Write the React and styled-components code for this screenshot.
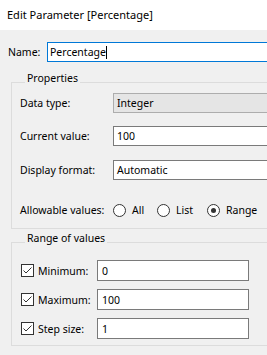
import React from 'react';
import styled, {createGlobalStyle} from 'styled-components';

const GlobalStyle = createGlobalStyle`
  html, body {
    margin: 0;
    padding: 0;
    background: #f0f0f0;
  }
  body {
    font-family: 'Noto Sans', 'Liberation Sans', sans-serif;
    font-size: 10.5px;
    color: #000;
  }
`;

const Dialog = styled.div`
  width: 267px;
  height: 355px;
  overflow: hidden;
  background: #f0f0f0;
  display: flex;
  flex-direction: column;
`;

const TitleBar = styled.div`
  height: 30px;
  flex: none;
  background: #fff;
  padding-left: 7px;
  line-height: 30px;
  font-size: 11px;
  white-space: nowrap;
`;

const Body = styled.div`
  flex: 1;
  display: flex;
  flex-direction: column;
`;

const NameRow = styled.div`
  display: flex;
  align-items: center;
  margin-top: 12px;
  padding-left: 8px;
`;

const NameLabel = styled.span`
  width: 39px;
  flex: none;
`;

const Field = styled.div`
  box-sizing: border-box;
  height: ${p => p.h || 20}px;
  width: ${p => (p.w ? `${p.w}px` : '300px')};
  flex: none;
  border: 1px solid ${p => (p.focused ? '#0078d7' : p.disabled ? '#adadad' : '#7a7a7a')};
  background: ${p => (p.disabled ? '#e5e5e5' : '#fff')};
  padding-left: ${p => p.pad || 3}px;
  display: flex;
  align-items: center;
  white-space: nowrap;
`;

const Caret = styled.span`
  display: inline-block;
  width: 1px;
  height: 13px;
  background: #000;
`;

const Group = styled.fieldset`
  margin: ${p => p.top}px 0 0 11px;
  padding: ${p => p.pt}px 0 ${p => p.pb}px 8px;
  width: 400px;
  border: 1px solid #dcdcdc;
  min-width: 0;
  display: flex;
  flex-direction: column;
`;

const Legend = styled.legend`
  margin-left: 5px;
  padding: 0 2px 9px;
  line-height: 12px;
`;

const Row = styled.div`
  display: flex;
  align-items: center;
  height: ${p => p.h || 20}px;
  margin-top: ${p => p.gap || 0}px;
`;

const Label = styled.span`
  width: ${p => p.w}px;
  flex: none;
  white-space: nowrap;
`;

const RadioGroup = styled.div`
  display: flex;
  align-items: center;
`;

const RadioItem = styled.label`
  display: flex;
  align-items: center;
  width: ${p => (p.w ? `${p.w}px` : 'auto')};
  flex: none;
`;

const RadioCircle = styled.span`
  box-sizing: border-box;
  width: 13px;
  height: 13px;
  border: 1px solid #333;
  border-radius: 50%;
  background: #fff;
  margin-right: 6px;
  display: flex;
  align-items: center;
  justify-content: center;

  &::after {
    content: '';
    width: 5px;
    height: 5px;
    border-radius: 50%;
    background: ${p => (p.checked ? '#333' : 'transparent')};
  }
`;

const CheckBox = styled.span`
  box-sizing: border-box;
  width: 13px;
  height: 13px;
  border: 1px solid #333;
  background: #fff;
  margin: 0 4px 0 1px;
  flex: none;
  display: flex;
  align-items: center;
  justify-content: center;
`;

const Check = () => (
  <svg width="11" height="11" viewBox="0 0 11 11">
    <path d="M1.5 5.5 L4 8 L9.5 2.5" fill="none" stroke="#333" strokeWidth="1" />
  </svg>
);

const Radio = ({label, checked, w}) => (
  <RadioItem w={w}>
    <RadioCircle checked={checked} />
    {label}
  </RadioItem>
);

const RangeRow = ({label, value, gap}) => (
  <Row h={21} gap={gap}>
    <CheckBox>
      <Check />
    </CheckBox>
    <Label w={59}>{label}</Label>
    <Field h={21} w={152} pad={4}>
      {value}
    </Field>
  </Row>
);

const App = () => (
  <Dialog>
    <GlobalStyle />
    <TitleBar>Edit Parameter [Percentage]</TitleBar>
    <Body>
      <NameRow>
        <NameLabel>Name:</NameLabel>
        <Field focused pad={2}>
          Percentage
          <Caret />
        </Field>
      </NameRow>

      <Group top={10} pt={0} pb={8}>
        <Legend>Properties</Legend>
        <Row>
          <Label w={93}>Data type:</Label>
          <Field disabled>Integer</Field>
        </Row>
        <Row gap={13}>
          <Label w={93}>Current value:</Label>
          <Field>100</Field>
        </Row>
        <Row gap={14}>
          <Label w={93}>Display format:</Label>
          <Field>Automatic</Field>
        </Row>
        <Row gap={20}>
          <Label w={93}>Allowable values:</Label>
          <RadioGroup>
            <Radio label="All" w={44} />
            <Radio label="List" w={50} />
            <Radio label="Range" checked />
          </RadioGroup>
        </Row>
      </Group>

      <Group top={3} pt={7} pb={6}>
        <Legend>Range of values</Legend>
        <RangeRow label="Minimum:" value="0" />
        <RangeRow label="Maximum:" value="100" gap={8} />
        <RangeRow label="Step size:" value="1" gap={8} />
      </Group>
    </Body>
  </Dialog>
);

export default App;
